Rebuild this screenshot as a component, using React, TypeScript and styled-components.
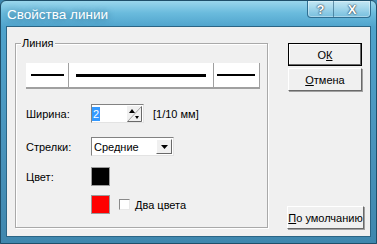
import React from "react";
import styled, { createGlobalStyle } from "styled-components";

const Global = createGlobalStyle`
  html, body { margin: 0; padding: 0; background: #3d86ad; }
  body { font-family: "Liberation Sans", Arial, sans-serif; font-size: 11px; color: #000; }
`;

const Win = styled.div`
  width: 377px;
  height: 244px;
  box-sizing: border-box;
  display: flex;
  flex-direction: column;
  background: linear-gradient(180deg, #9ad6ec 0px, #6abbdd 12px, #4fa3cc 26px, #4993bb 60%, #3f87ae 100%);
  border: 1px solid #1f4f6a;
  border-radius: 6px 6px 0 0;
  padding: 0 5px 6px 5px;
`;

const TitleBar = styled.div`
  height: 25px;
  display: flex;
  align-items: flex-start;
`;

const Title = styled.div`
  font-size: 13.5px;
  color: #fff;
  padding: 6px 0 0 1px;
  text-shadow: 0 0 6px rgba(20, 60, 90, 0.6);
`;

const Caption = styled.div`
  margin-left: auto;
  display: flex;
  height: 16px;
  border: 1px solid #2f6f92;
  border-top: none;
  border-radius: 0 0 4px 4px;
  background: linear-gradient(180deg, rgba(255,255,255,0.4), rgba(255,255,255,0.15));
  box-shadow: inset 0 0 0 1px rgba(255,255,255,0.35);
  overflow: hidden;
`;

const CapBtn = styled.div<{ $w: number }>`
  width: ${(p) => p.$w}px;
  display: flex;
  align-items: center;
  justify-content: center;
  font-weight: bold;
  font-size: 13px;
  color: #fff;
  text-shadow: 0 0 1px #234, 0 0 2px #234;
  & + & { border-left: 1px solid rgba(40, 90, 120, 0.6); }
`;

const Body = styled.div`
  flex: 1;
  background: #f0f0f0;
  display: flex;
  padding: 16px 6px 0 8px;
  border: 1px solid #2b6585;
`;

const Group = styled.div`
  position: relative;
  width: 256px;
  height: 185px;
  box-sizing: border-box;
  border: 1px solid #a9a9a9;
  box-shadow: inset 1px 1px 0 #fff, 1px 1px 0 #fff;
  padding: 19px 0 0 10px;
  display: flex;
  flex-direction: column;
`;

const Legend = styled.span`
  position: absolute;
  top: -7px;
  left: 5px;
  padding: 0 1px;
  background: #f0f0f0;
`;

const Preview = styled.div`
  width: 234px;
  height: 26px;
  display: flex;
  border-bottom: 2px solid #a0a0a0;
  box-sizing: border-box;
  background: #f5f5f5;
`;

const Cell = styled.div<{ $w: number }>`
  width: ${(p) => p.$w}px;
  background: #fff;
  border-right: 1px solid #a0a0a0;
  display: flex;
  align-items: center;
  justify-content: center;
`;

const Stroke = styled.div<{ $w: number; $h: number }>`
  width: ${(p) => p.$w}px;
  height: ${(p) => p.$h}px;
  background: #000;
`;

const Row = styled.div<{ $top: number }>`
  display: flex;
  align-items: center;
  margin-top: ${(p) => p.$top}px;
  height: 19px;
`;

const Label = styled.span<{ $w: number }>`
  width: ${(p) => p.$w}px;
`;

const Sunken = styled.div<{ $w: number }>`
  width: ${(p) => p.$w}px;
  height: 19px;
  box-sizing: border-box;
  background: #fff;
  border-top: 1px solid #828282;
  border-left: 1px solid #828282;
  border-right: 1px solid #e3e3e3;
  border-bottom: 1px solid #e3e3e3;
  display: flex;
  align-items: center;
`;

const Sel = styled.span`
  background: #3399ff;
  color: #fff;
  padding: 0 1px;
  line-height: 14px;
`;

const Spin = styled.svg`
  margin-left: auto;
  margin-right: 1px;
`;

const Units = styled.span`
  margin-left: 9px;
`;

const ComboText = styled.span`
  padding-left: 2px;
  flex: 1;
`;

const DropBtn = styled.div`
  width: 16px;
  height: 15px;
  margin-right: 1px;
  box-sizing: border-box;
  background: #f0f0f0;
  border: 1px solid;
  border-color: #fff #696969 #696969 #fff;
  display: flex;
  align-items: center;
  justify-content: center;
`;

const Swatch = styled.div<{ $c: string; $indent: number }>`
  width: 19px;
  height: 19px;
  box-sizing: border-box;
  background: ${(p) => p.$c};
  border: 1px solid #9a9a9a;
  margin-left: ${(p) => p.$indent}px;
`;

const Check = styled.div`
  width: 11px;
  height: 11px;
  box-sizing: border-box;
  margin: 0 5px 0 9px;
  background: #fff;
  border: 1px solid;
  border-color: #8a8a8a #e8e8e8 #e8e8e8 #8a8a8a;
`;

const Side = styled.div`
  margin-left: 20px;
  display: flex;
  flex-direction: column;
  align-items: flex-start;
`;

const Btn = styled.div<{ $w: number; $def?: boolean; $top: number; $left?: number }>`
  width: ${(p) => p.$w}px;
  height: 23px;
  margin-top: ${(p) => p.$top}px;
  margin-left: ${(p) => p.$left ?? 0}px;
  box-sizing: border-box;
  display: flex;
  align-items: center;
  justify-content: center;
  background: #f0f0f0;
  border: 1px solid;
  border-color: ${(p) => (p.$def ? "#000" : "#fff #696969 #696969 #fff")};
  box-shadow: ${(p) => (p.$def ? "inset -1px -1px 0 #696969, inset 1px 1px 0 #fff" : "1px 1px 0 #a0a0a0")};
  & u { text-decoration: underline; text-underline-offset: 1px; }
`;

export default function App() {
  return (
    <>
      <Global />
      <Win>
        <TitleBar>
          <Title>Свойства линии</Title>
          <Caption>
            <CapBtn $w={25}>?</CapBtn>
            <CapBtn $w={36}>X</CapBtn>
          </Caption>
        </TitleBar>
        <Body>
          <Group>
            <Legend>Линия</Legend>
            <Preview>
              <Cell $w={43}><Stroke $w={33} $h={2} /></Cell>
              <Cell $w={145}><Stroke $w={130} $h={3} /></Cell>
              <Cell $w={46}><Stroke $w={38} $h={2} /></Cell>
            </Preview>
            <Row $top={15}>
              <Label $w={65}>Ширина:</Label>
              <Sunken $w={53}>
                <Sel>2</Sel>
                <Spin width="15" height="16" viewBox="0 0 15 16">
                  <rect x="0" y="0" width="15" height="16" fill="#f0f0f0" />
                  <line x1="0.5" y1="15.5" x2="14.5" y2="0.5" stroke="#a0a0a0" />
                  <line x1="14.5" y1="0.5" x2="14.5" y2="15.5" stroke="#696969" />
                  <line x1="0.5" y1="15.5" x2="14.5" y2="15.5" stroke="#696969" />
                  <polygon points="2,7 5,3 8,7" fill="#000" />
                  <polygon points="8,10 12,10 10,13" fill="#000" />
                </Spin>
              </Sunken>
              <Units>[1/10 мм]</Units>
            </Row>
            <Row $top={14}>
              <Label $w={65}>Стрелки:</Label>
              <Sunken $w={83}>
                <ComboText>Средние</ComboText>
                <DropBtn>
                  <svg width="7" height="4" viewBox="0 0 7 4"><polygon points="0,0 7,0 3.5,4" fill="#000" /></svg>
                </DropBtn>
              </Sunken>
            </Row>
            <Row $top={11}>
              <Label $w={0}>Цвет:</Label>
              <Swatch $c="#000" $indent={65} />
            </Row>
            <Row $top={9}>
              <Swatch $c="#ff0000" $indent={65} />
              <Check />
              <span>Два цвета</span>
            </Row>
          </Group>
          <Side>
            <Btn $w={74} $def $top={0}>О<u>К</u></Btn>
            <Btn $w={74} $top={2}><u>О</u>тмена</Btn>
            <Btn $w={77} $top={115} $left={-1}><u>П</u>о умолчанию</Btn>
          </Side>
        </Body>
      </Win>
    </>
  );
}
